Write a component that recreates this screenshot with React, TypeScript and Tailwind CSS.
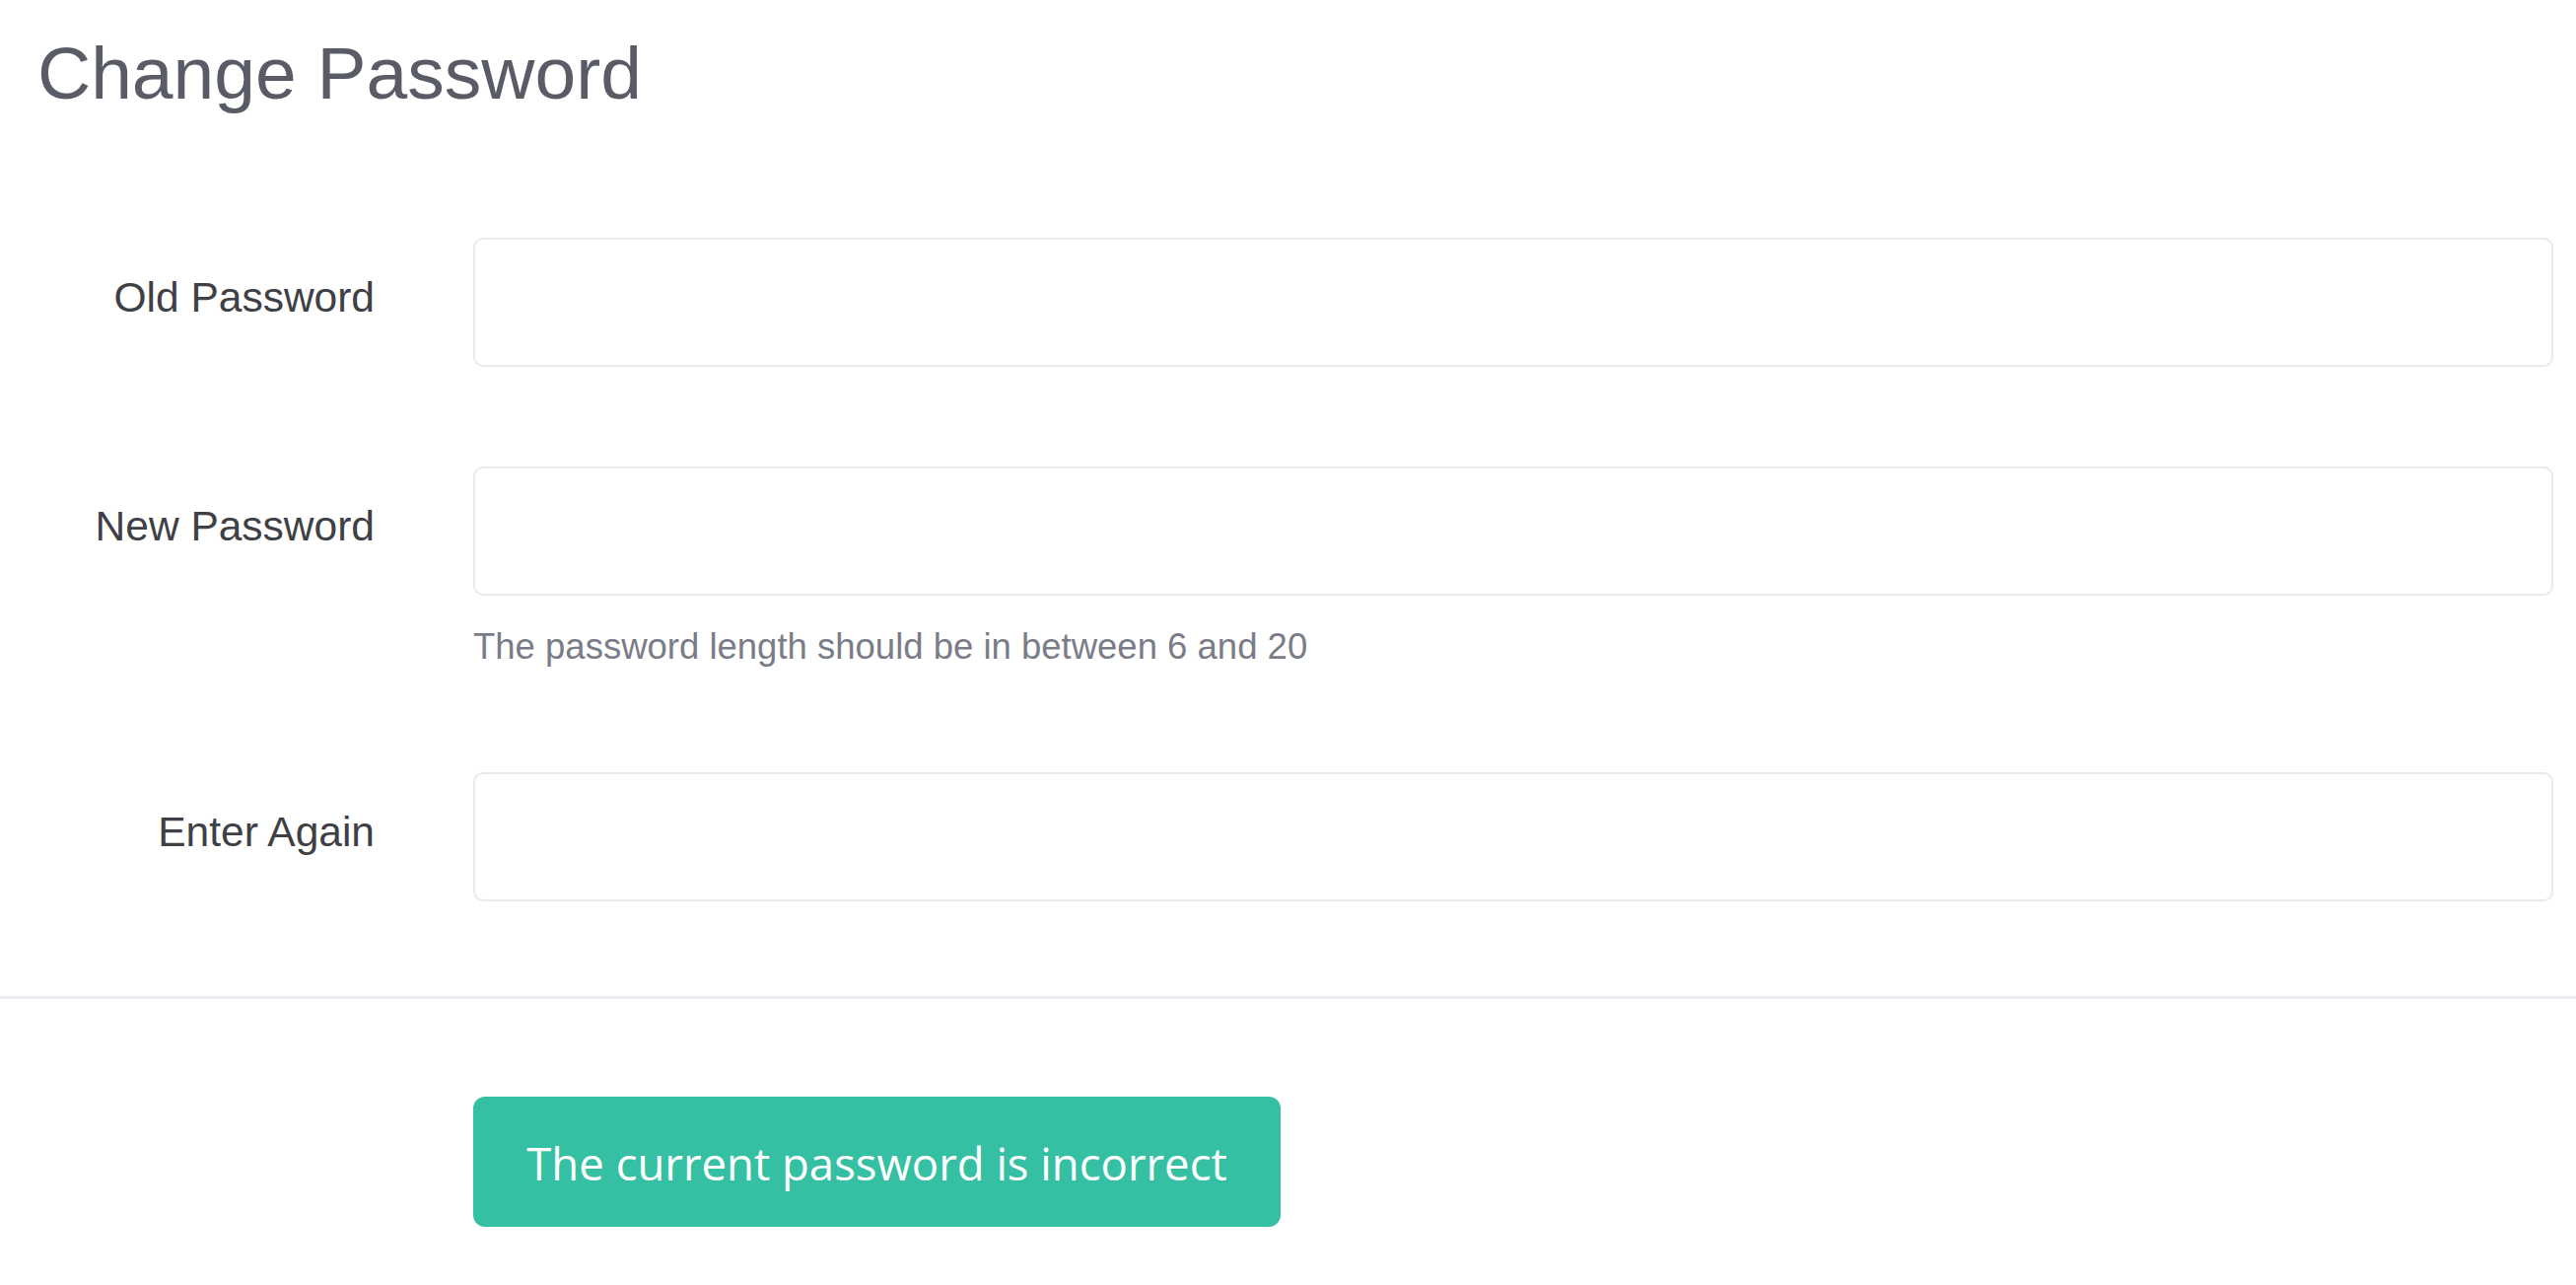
import React from "react";

function Row({ label, children }: { label: string; children?: React.ReactNode }) {
  return (
    <div className="flex items-start">
      <div className="w-[380px] shrink-0 h-[131px] flex items-center justify-end pb-[8px]">
        <span className="text-[42.5px] leading-none text-[#3f3f46]">{label}</span>
      </div>
      <div className="ml-[100px] mr-[23px] flex-1 flex flex-col">
        <input
          type="password"
          className="h-[131px] w-full rounded-[10px] border-2 border-[#e9e9f0] bg-white outline-none px-6 text-[40px]"
        />
        {children}
      </div>
    </div>
  );
}

export default function App() {
  return (
    <div
      className="min-h-screen bg-white"
      style={{ fontFamily: '"Liberation Sans", Arial, sans-serif' }}
    >
      <h1 className="pl-[38px] pt-[31px] text-[75px] leading-[86px] font-normal text-[#595c66]">
        Change Password
      </h1>
      <div className="mt-[124px] flex flex-col">
        <Row label="Old Password" />
        <div className="mt-[101px]">
          <Row label="New Password">
            <p className="mt-[31px] text-[36.5px] leading-[41px] text-[#7a7c87]">
              The password length should be in between 6 and 20
            </p>
          </Row>
        </div>
        <div className="mt-[107px]">
          <Row label="Enter Again" />
        </div>
      </div>
      <div className="mt-[96px] h-[3px] w-full bg-[#ebebf1]" />
      <div className="mt-[99px] pl-[480px]">
        <button
          className="h-[132px] w-[819px] rounded-[12px] bg-[#35bfa3] text-white text-[45.5px] pt-[2px]"
          style={{ fontFamily: '"Open Sans", "Noto Sans", sans-serif' }}
        >
          The current password is incorrect
        </button>
      </div>
    </div>
  );
}
